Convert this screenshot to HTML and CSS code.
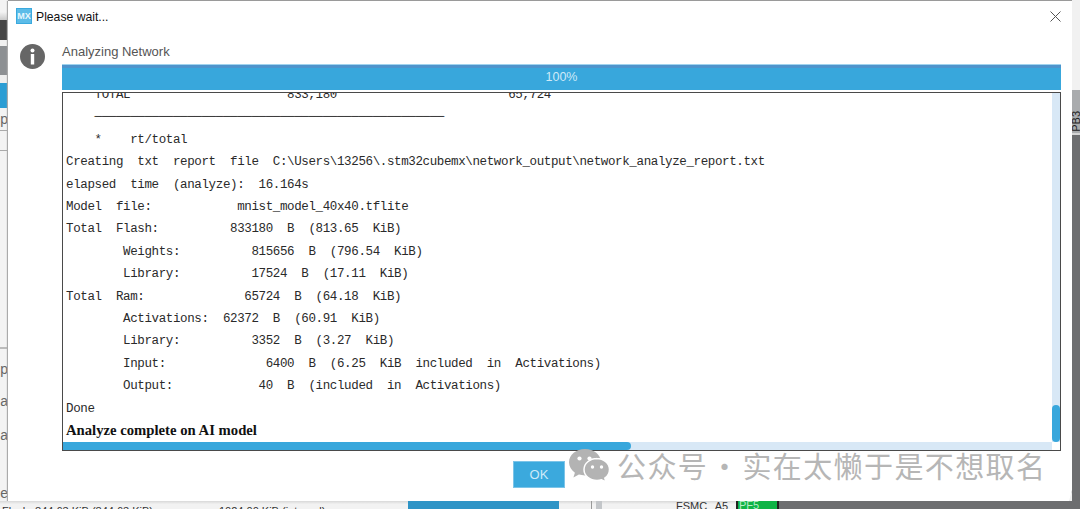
FILE: index.html
```html
<!DOCTYPE html>
<html lang="zh">
<head>
<meta charset="utf-8">
<title>Please wait...</title>
<link rel="stylesheet" href="styles.css">
</head>
<body>
<div class="desktop">
  <div class="left-strip">
    <div class="ls ls-a"></div>
    <div class="ls ls-dark"></div>
    <div class="ls ls-b"></div>
    <div class="ls ls-gray"></div>
    <div class="ls ls-c"></div>
    <div class="ls ls-blue"></div>
    <div class="ls ls-text ls-np">np</div>
    <div class="ls ls-line ls-d"></div>
    <div class="ls ls-line ls-e"></div>
    <div class="ls ls-f"></div>
    <div class="ls ls-line ls-g"></div>
    <div class="ls ls-text ls-p">p</div>
    <div class="ls ls-text ls-la">la</div>
    <div class="ls ls-text ls-la">la</div>
    <div class="ls ls-text ls-le">le</div>
  </div>
  <div class="right-strip">
    <div class="rs-light"></div>
    <div class="rs-pin"><span class="rs-label">PB3</span></div>
    <div class="rs-dark"></div>
  </div>
  <div class="bottom-strip">
    <span class="bs-flash">Flash: 844.63 KiB (844.63 KiB)</span>
    <span class="bs-total">1024.00 KiB (internal)</span>
    <span class="bs-blue"></span>
    <span class="bs-tick"></span>
    <span class="bs-fsmc">FSMC&nbsp; A5</span>
    <span class="bs-green">PF5</span>
    <span class="bs-dark"></span>
  </div>
</div>

<section class="dialog">
  <header class="titlebar">
    <svg class="mx" viewBox="0 0 16 16" aria-hidden="true"><rect width="16" height="16" fill="#3aa9de"/><rect x="1" y="1" width="14" height="14" fill="#5cbce8"/></svg>
    <span class="mx-text">MX</span>
    <span class="title">Please wait...</span>
    <svg class="close" viewBox="0 0 11 11" aria-hidden="true"><path d="M.5.5l10 10M10.5.5l-10 10" stroke="#555" stroke-width="1" fill="none"/></svg>
  </header>
  <div class="content">
    <svg class="info" viewBox="0 0 25 25" aria-hidden="true"><circle cx="12.5" cy="12.5" r="12.5" fill="#666"/><circle cx="12.5" cy="6.6" r="2" fill="#fff"/><rect x="10.8" y="10" width="3.4" height="10.5" fill="#fff"/></svg>
    <div class="main">
      <div class="label">Analyzing Network</div>
      <div class="progress">100%</div>
      <div class="log">
        <div class="log-view">
<pre class="log-text">    TOTAL                      833,180                        65,724
    ─────────────────────────────────────────────────
    *    rt/total
Creating  txt  report  file  C:\Users\13256\.stm32cubemx\network_output\network_analyze_report.txt
elapsed  time  (analyze):  16.164s
Model  file:            mnist_model_40x40.tflite
Total  Flash:          833180  B  (813.65  KiB)
        Weights:          815656  B  (796.54  KiB)
        Library:          17524  B  (17.11  KiB)
Total  Ram:              65724  B  (64.18  KiB)
        Activations:  62372  B  (60.91  KiB)
        Library:          3352  B  (3.27  KiB)
        Input:              6400  B  (6.25  KiB  included  in  Activations)
        Output:            40  B  (included  in  Activations)
Done</pre>
          <div class="log-bold">Analyze complete on AI model</div>
        </div>
        <div class="vtrack"><div class="vthumb"></div></div>
        <div class="htrack"><div class="hthumb"></div></div>
        <div class="corner"></div>
      </div>
    </div>
  </div>
  <div class="actions"><button class="ok" type="button">OK</button></div>
</section>

<div class="watermark">
  <svg class="wechat" viewBox="0 0 41 33" aria-hidden="true">
    <path d="M16 0C7.2 0 0 5.9 0 13.3c0 4.2 2.3 7.9 5.9 10.4L4.400 28.400l5.500-2.800c1.900.5 4 .8 6.100.8C24.800 26.400 32 20.500 32 13.300 32 5.900 24.800 0 16 0z" fill="#b3b3b3"/>
    <path d="M28 9.500c-7.200 0-13 4.900-13 11s5.800 11 13 11c1.600 0 3.100-.2 4.500-.7l4.500 2.200-1.200-3.900c3-2 4.700-5.100 4.700-8.600 0-6.100-5.800-11-13-11z" fill="#b3b3b3" stroke="#fff" stroke-width="1.500"/>
    <circle cx="10.500" cy="9.500" r="2.100" fill="#fff"/><circle cx="20.500" cy="9.500" r="2.100" fill="#fff"/>
    <circle cx="23.500" cy="18" r="1.700" fill="#fff"/><circle cx="32.500" cy="18" r="1.700" fill="#fff"/>
  </svg>
  <span class="wm-text">公众号 · 实在太懒于是不想取名</span>
</div>
</body>
</html>
```
FILE: styles.css
```css
* { box-sizing: border-box; }
html, body { margin: 0; padding: 0; }
body {
  width: 1080px;
  height: 509px;
  overflow: hidden;
  position: relative;
  background: #f1f1f1;
  font-family: "Liberation Sans", Arial, sans-serif;
}

/* backdrop application */
.desktop {
  width: 1080px;
  height: 509px;
  display: grid;
  grid-template-columns: 8px 1fr 8px;
  grid-template-rows: 501px 8px;
}
.left-strip {
  grid-column: 1; grid-row: 1;
  display: flex; flex-direction: column;
  overflow: hidden;
  background: #f3f3f3;
  color: #666;
  font-size: 14px;
}
.ls { flex: none; }
.ls-a { height: 20px; background: linear-gradient(#f3f3f3 60%, #c9c9c9); }
.ls-dark { height: 20px; background: #454545; }
.ls-b { height: 6px; background: #f1f1f1; }
.ls-gray { height: 29px; background: #8d9093; }
.ls-c { height: 8px; background: #eee; }
.ls-blue { height: 25px; background: #2b9dd4; }
.ls-text { white-space: nowrap; display: flex; justify-content: flex-end; align-items: center; }
.ls-np { height: 22px; }
.ls-line { border-top: 1px solid #aaa; }
.ls-d { height: 20px; }
.ls-e { height: 20px; }
.ls-f { height: 177px; }
.ls-g { height: 7px; border-top: 2px solid #bbb; }
.ls-p { height: 30px; }
.ls-la { height: 34px; }
.ls-le { height: 49px; align-items: flex-end; }

.right-strip {
  grid-column: 3; grid-row: 1;
  display: flex; flex-direction: column;
  background: #6d6e70;
}
.rs-light { height: 90px; background: #f1f1f1; }
.rs-pin {
  height: 45px;
  background: #a9abad;
  border-bottom: 2px solid #d5d5d5;
  display: flex; align-items: flex-end; justify-content: center;
}
.rs-label {
  writing-mode: vertical-rl;
  transform: rotate(180deg);
  font-size: 11px;
  line-height: 8px;
  color: #222;
  padding-top: 1px;
}
.rs-dark { flex: 1; }

.bottom-strip {
  grid-column: 1 / 4; grid-row: 2;
  display: flex;
  overflow: hidden;
  background: linear-gradient(#d8d8d8, #f2f2f2 40%);
  font-size: 11px;
  color: #333;
  white-space: nowrap;
}
.bs-flash { width: 217px; padding: 4px 0 0 2px; line-height: 12px; flex: none; }
.bs-total { width: 191px; padding: 4px 0 0 2px; line-height: 12px; flex: none; }
.bs-blue { width: 151px; background: #2e94c6; flex: none; }
.bs-tick { width: 11px; margin-left: 32px; border-left: 1px solid #999; background: #c3c6c9; flex: none; background-clip: content-box; padding-left: 4px; }
.bs-fsmc { width: 60px; margin-left: 74px; line-height: 8px; padding-top: 1px; flex: none; word-spacing: 1px; }
.bs-green {
  width: 43px;
  background: #0fb446;
  border-left: 2px solid #222;
  border-right: 2px solid #222;
  color: #b9ecc9;
  line-height: 8px;
  padding-left: 1px;
  flex: none;
}
.bs-dark { flex: 1; background: #6d6e70; }

/* dialog */
.dialog {
  position: absolute;
  left: 8px;
  top: 1px;
  width: 1064px;
  height: 500px;
  background: #fff;
  box-shadow: 0 -1px 0 #9a9a9a, -1px 0 1px #aaa;
  display: flex;
  flex-direction: column;
  clip-path: polygon(-2px -2px, 100% -2px, 100% 489px, 1061px 100%, -2px 100%);
}
.titlebar {
  height: 30px;
  flex: none;
  position: relative;
  display: flex;
  align-items: center;
  padding: 0 11px 0 8px;
}
.mx { width: 16px; height: 16px; flex: none; }
.mx-text {
  position: absolute;
  left: 8px;
  top: 7px;
  width: 16px;
  text-align: center;
  font-size: 9px;
  line-height: 16px;
  font-weight: 700;
  color: #e6f6fd;
}
.title { margin-left: 4px; font-size: 12.2px; color: #111; flex: 1; padding-top: 1px; }
.close { width: 11px; height: 11px; flex: none; }

.content {
  flex: none;
  height: 420px;
  display: flex;
  padding: 12px 11px 0 12px;
}
.info { width: 25px; height: 25px; flex: none; margin-top: 1px; }
.main {
  flex: 1;
  min-width: 0;
  margin-left: 17px;
  display: flex;
  flex-direction: column;
}
.label { height: 16px; font-size: 13px; line-height: 16px; color: #555; margin-top: 1px; }
.progress {
  flex: none;
  height: 25px;
  margin-top: 5px;
  background: #38a7dc;
  border-top: 3px solid #4f94cc;
  box-shadow: 0 -1px 0 #9fd3ee;
  color: #cfeaf8;
  font-size: 12.5px;
  line-height: 18px;
  text-align: center;
}
.log {
  flex: none;
  height: 359px;
  margin-top: 2px;
  border: 1.500px solid #4a4a4a;
  border-right-width: 1px;
  display: grid;
  grid-template-columns: 1fr 8px;
  grid-template-rows: 1fr 8px;
  background: #fff;
}
.log-view { overflow: hidden; padding-left: 3px; min-width: 0; min-height: 0; }
.log-text {
  margin: -9px 0 0;
  font-family: "Liberation Mono", "Courier New", monospace;
  font-size: 12.5px;
  letter-spacing: -0.37px;
  line-height: 22.4px;
  color: #2a2a2a;
  white-space: pre;
}
.log-bold {
  margin-top: -1px;
  font-family: "Liberation Serif", "Times New Roman", serif;
  font-weight: 700;
  font-size: 14.7px;
  line-height: 22.4px;
  color: #111;
}
.vtrack { background: #d8e8f6; padding-top: 312px; }
.vthumb { height: 37px; background: #38a7dc; border-radius: 4px; }
.htrack { background: #d8e8f6; }
.hthumb { width: 568px; height: 100%; background: #38a7dc; border-radius: 0 4px 4px 0; }
.corner { background: #fff; }

.actions { flex: none; display: flex; justify-content: center; padding: 10px 2px 0 0; }
.ok {
  width: 52px;
  height: 27px;
  padding: 0;
  border: 1px solid #7cc4e8;
  background: #3ba9dd;
  color: #cdeaf8;
  font-family: inherit;
  font-size: 13px;
}

/* image watermark */
.watermark {
  position: absolute;
  left: 569px;
  top: 448px;
  display: flex;
  align-items: center;
}
.wechat { width: 41px; height: 33px; flex: none; }
.wm-text {
  margin-left: 7px;
  font-family: "Noto Sans CJK SC", sans-serif;
  font-size: 29px;
  line-height: 34px;
  letter-spacing: 1.4px;
  word-spacing: -6px;
  white-space: nowrap;
  color: #b6b6b6;
}
```
